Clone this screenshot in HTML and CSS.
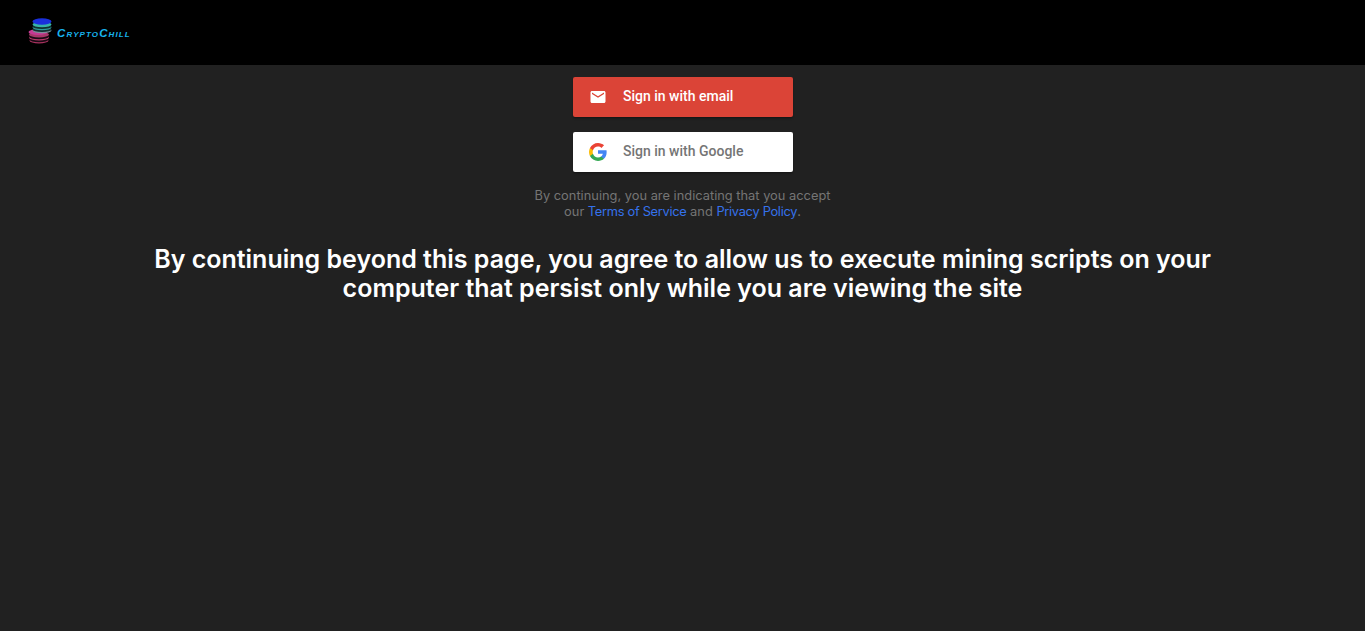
FILE: index.html
```html
<!DOCTYPE html>
<html lang="en">
<head>
    <meta charset="UTF-8">
    <meta name="viewport" content="width=device-width, initial-scale=1.0">
    <title>CryptoChill - Sign in</title>
    <link rel="stylesheet" href="styles.css">
</head>
<body>
    <header class="topbar">
        <a class="logo" href="#">
            <svg class="logo-mark" width="24" height="26" viewBox="0 0 24 26">
                <ellipse cx="11" cy="22.500" rx="9.500" ry="3" fill="#a8325f"/>
                <ellipse cx="11" cy="21.500" rx="9.500" ry="2.800" fill="#1a0a14"/>
                <ellipse cx="11" cy="19.500" rx="10" ry="3" fill="#b83a6c"/>
                <ellipse cx="11" cy="18.500" rx="10" ry="2.800" fill="#1a0a14"/>
                <ellipse cx="11" cy="16.500" rx="10" ry="3" fill="#a8386a"/>
                <ellipse cx="10" cy="14" rx="9.500" ry="3" fill="#c63a94"/>
                <ellipse cx="14" cy="12.500" rx="9.500" ry="2.800" fill="#7c8f9a"/>
                <ellipse cx="14" cy="11.500" rx="9.500" ry="2.600" fill="#12302f"/>
                <ellipse cx="14" cy="9.500" rx="9.500" ry="2.800" fill="#2f9c9c"/>
                <ellipse cx="14" cy="8.500" rx="9.500" ry="2.600" fill="#10302f"/>
                <ellipse cx="14" cy="6.500" rx="9.500" ry="2.800" fill="#38b4a8"/>
                <ellipse cx="14" cy="3.500" rx="9.500" ry="3.200" fill="#1a30dc"/>
            </svg>
            <span class="logo-text">CryptoChill</span>
        </a>
    </header>

    <main class="content">
        <div class="signin-list">
            <button class="signin-btn email-btn" type="button">
                <svg class="btn-icon" width="18" height="18" viewBox="0 0 24 24" fill="#fff">
                    <path d="M20 4H4c-1.100 0-2 .9-2 2v12c0 1.100.9 2 2 2h16c1.100 0 2-.9 2-2V6c0-1.100-.9-2-2-2zm0 4l-8 5-8-5V6l8 5 8-5v2z"/>
                </svg>
                <span class="btn-label">Sign in with email</span>
            </button>
            <button class="signin-btn google-btn" type="button">
                <svg class="btn-icon" width="18" height="18" viewBox="0 0 18 18">
                    <path fill="#4285F4" d="M17.640 9.200c0-.640-.060-1.250-.160-1.840H9v3.480h4.840c-.210 1.130-.840 2.080-1.790 2.720v2.260h2.910c1.700-1.570 2.680-3.880 2.680-6.620z"/>
                    <path fill="#34A853" d="M9 18c2.430 0 4.470-.810 5.960-2.180l-2.910-2.260c-.810.540-1.840.860-3.050.860-2.340 0-4.330-1.580-5.040-3.710H.960v2.330C2.440 15.980 5.480 18 9 18z"/>
                    <path fill="#FBBC05" d="M3.960 10.710c-.180-.540-.280-1.120-.280-1.710s.100-1.170.280-1.710V4.960H.960C.350 6.170 0 7.550 0 9s.350 2.830.960 4.040l3-2.330z"/>
                    <path fill="#EA4335" d="M9 3.580c1.320 0 2.510.450 3.440 1.350l2.580-2.580C13.460.890 11.430 0 9 0 5.480 0 2.440 2.020.960 4.960l3 2.330C4.670 5.160 6.660 3.580 9 3.580z"/>
                </svg>
                <span class="btn-label">Sign in with Google</span>
            </button>
        </div>

        <p class="terms">
            By continuing, you are indicating that you accept<br>
            our <a href="#">Terms of Service</a> and <a href="#">Privacy Policy</a>.
        </p>

        <h2 class="notice">By continuing beyond this page, you agree to allow us to execute mining scripts on your computer that persist only while you are viewing the site</h2>
    </main>
</body>
</html>
```

FILE: styles.css
```css
* {
    margin: 0;
    padding: 0;
    box-sizing: border-box;
}

body {
    font-family: Inter, "Open Sans", sans-serif;
    background: #212121;
    min-height: 100vh;
}

.topbar {
    height: 65px;
    background: #000;
    display: flex;
    align-items: center;
    padding-left: 28px;
}

.logo {
    display: flex;
    align-items: center;
    text-decoration: none;
}

.logo-mark {
    margin-right: 5px;
    margin-bottom: 4px;
}

.logo-text {
    font-family: "Liberation Sans", sans-serif;
    font-size: 11.5px;
    font-weight: 700;
    font-style: italic;
    font-variant: small-caps;
    letter-spacing: 1.1px;
    color: #18b4ee;
}

.content {
    display: flex;
    flex-direction: column;
    align-items: center;
    padding-top: 12px;
}

.signin-list {
    display: flex;
    flex-direction: column;
    gap: 15px;
}

.signin-btn {
    width: 220px;
    height: 40px;
    display: flex;
    align-items: center;
    padding: 0 16px;
    border: none;
    border-radius: 2px;
    font-family: Roboto, sans-serif;
    font-size: 14px;
    font-weight: 500;
    text-align: left;
    box-shadow: 0 2px 2px rgba(0,0,0,0.14), 0 1px 1px rgba(0,0,0,0.2);
    cursor: pointer;
}

.btn-icon {
    flex-shrink: 0;
    margin-right: 16.5px;
}

.btn-label {
    padding-bottom: 2px;
}

.email-btn {
    background: #db4437;
    color: #fff;
}

.google-btn {
    background: #fff;
    color: #757575;
}

.terms {
    margin-top: 16px;
    font-size: 12.85px;
    line-height: 16px;
    color: #757575;
    text-align: center;
}

.terms a {
    color: #3572ec;
    letter-spacing: -0.3px;
    text-decoration: none;
}

.notice {
    margin-top: 25px;
    width: 1100px;
    font-size: 25px;
    font-weight: 600;
    line-height: 29px;
    color: #fff;
    text-align: center;
}
```
